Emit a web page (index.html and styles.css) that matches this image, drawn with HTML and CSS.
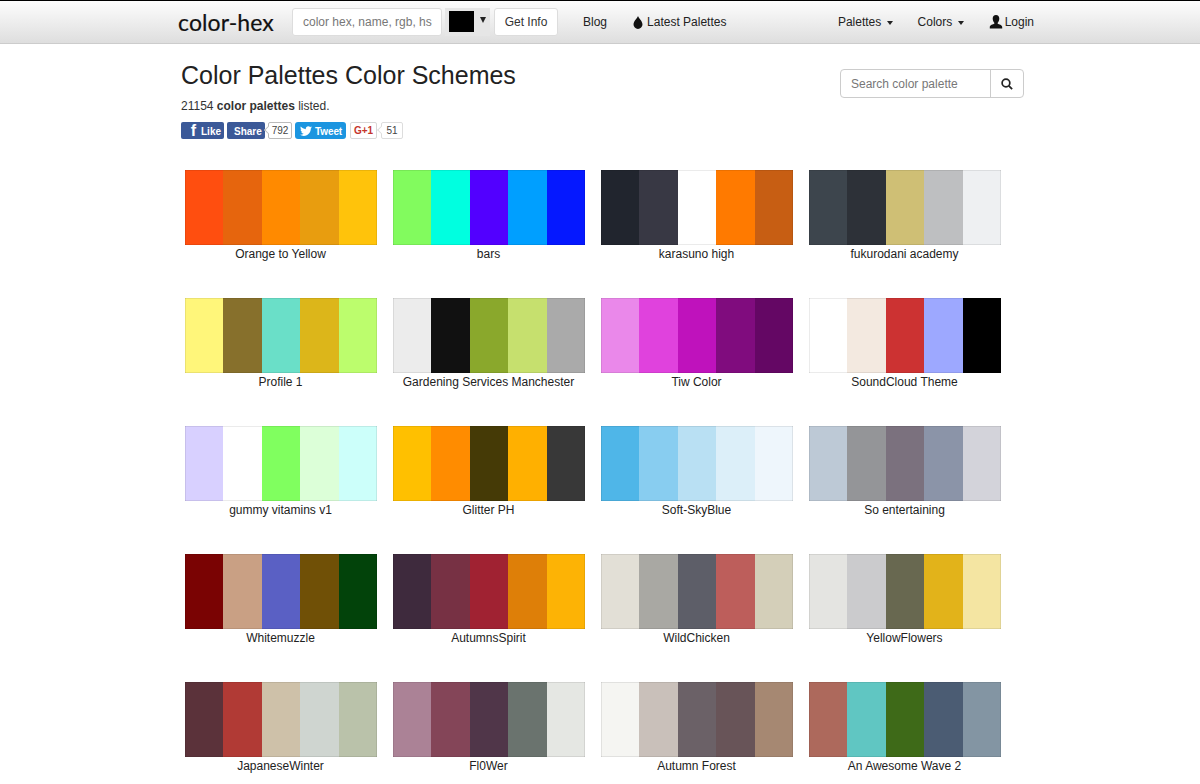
FILE: index.html
```html
<!DOCTYPE html>
<html>
	<head>
		<meta charset="utf-8">
		<title>Color Palettes Color Schemes</title>
		<link rel="stylesheet" href="styles.css">
	</head>
	<body>
		<div class="navbar">
			<div class="nav-inner">
				<a class="logo">color-hex</a>
				<div class="hex-input">color hex, name, rgb, hs</div>
				<div class="picker"><span class="picker-color"></span><span class="picker-arrow"></span></div>
				<div class="get-info">Get Info</div>
				<a class="nav-link blog">Blog</a>
				<a class="nav-link latest">
					<svg class="icon-drop" viewBox="0 0 12 14"><path d="M6 0C6.600 2.400 10.800 5.400 10.800 9C10.800 11.800 8.600 14 6 14C3.400 14 1.200 11.800 1.200 9C1.200 5.400 5.400 2.400 6 0Z"/></svg>
					Latest Palettes
				</a>
				<div class="nav-right">
					<a class="nav-link">Palettes <span class="caret"></span></a>
					<a class="nav-link">Colors <span class="caret"></span></a>
					<a class="nav-link login">
						<svg class="icon-user" viewBox="0 0 14 14"><path d="M7 0C9.200 0 10.300 1.600 10.300 3.600C10.300 5.400 9.500 6.900 8.700 7.700V8.700C10 9.300 13.200 10 13.200 12V13.600H0.800V12C0.800 10 4 9.300 5.300 8.700V7.700C4.500 6.900 3.700 5.400 3.700 3.600C3.700 1.600 4.800 0 7 0Z"/></svg>
						Login
					</a>
				</div>
			</div>
		</div>

		<div class="container">
			<div class="page-head">
				<div>
					<h1>Color Palettes Color Schemes</h1>
					<p class="count">21154 <b>color palettes</b> listed.</p>
					<div class="social">
						<span class="btn-fb like"><span class="fb-f">f</span>Like</span>
						<span class="btn-fb share">Share</span>
						<span class="bubble b-792">792</span>
						<span class="btn-tw">
							<svg class="icon-bird" viewBox="0 0 16 13"><path d="M16 1.500C15.400 1.800 14.800 2 14.100 2C14.800 1.600 15.300 1 15.600 0.200C14.900 0.600 14.200 0.900 13.500 1C12.900 0.400 12 0 11 0C9.200 0 7.700 1.500 7.700 3.300C7.700 3.600 7.700 3.800 7.800 4C5 3.900 2.600 2.600 1.100 0.600C0.800 1.100 0.700 1.600 0.700 2.200C0.700 3.300 1.300 4.300 2.200 4.900C1.600 4.900 1.100 4.700 0.700 4.500C0.700 6.100 1.800 7.500 3.300 7.800C2.800 7.900 2.300 7.900 1.800 7.800C2.200 9.100 3.400 10.100 4.900 10.100C3.700 11 2.200 11.600 0.600 11.600H0C1.500 12.500 3.200 13 5 13C11 13 14.400 8 14.400 3.600V3.200C15 2.800 15.600 2.200 16 1.500Z"/></svg>
							Tweet
						</span>
						<span class="btn-gplus">G+1</span>
						<span class="bubble b-51">51</span>
					</div>
				</div>
				<div class="search">
					<div class="search-input">Search color palette</div>
					<div class="search-btn">
						<svg viewBox="0 0 14 14"><circle cx="5.800" cy="5.800" r="4.500"/><path d="M9.200 9.200L13 13"/></svg>
					</div>
				</div>
			</div>

			<div class="palettes">
				<div class="palette">
					<div class="swatches"><i style="background:#ff4e0f"></i><i style="background:#e6650d"></i><i style="background:#ff8a00"></i><i style="background:#e89d0f"></i><i style="background:#ffc30b"></i></div>
					<div class="name">Orange to Yellow</div>
				</div>
				<div class="palette">
					<div class="swatches"><i style="background:#82fb5e"></i><i style="background:#00ffe0"></i><i style="background:#5200ff"></i><i style="background:#009fff"></i><i style="background:#0518ff"></i></div>
					<div class="name">bars</div>
				</div>
				<div class="palette">
					<div class="swatches"><i style="background:#21252e"></i><i style="background:#383844"></i><i style="background:#ffffff"></i><i style="background:#ff7a00"></i><i style="background:#c75e13"></i></div>
					<div class="name">karasuno high</div>
				</div>
				<div class="palette">
					<div class="swatches"><i style="background:#3d454d"></i><i style="background:#2d3138"></i><i style="background:#cfbf75"></i><i style="background:#bebfc1"></i><i style="background:#eef0f2"></i></div>
					<div class="name">fukurodani academy</div>
				</div>

				<div class="palette">
					<div class="swatches"><i style="background:#fff67a"></i><i style="background:#87702c"></i><i style="background:#6adfc8"></i><i style="background:#dcb61a"></i><i style="background:#bcfd6d"></i></div>
					<div class="name">Profile 1</div>
				</div>
				<div class="palette">
					<div class="swatches"><i style="background:#ececec"></i><i style="background:#111111"></i><i style="background:#8aa82c"></i><i style="background:#c6e06e"></i><i style="background:#aaaaaa"></i></div>
					<div class="name">Gardening Services Manchester</div>
				</div>
				<div class="palette">
					<div class="swatches"><i style="background:#ea88ea"></i><i style="background:#e042dd"></i><i style="background:#bf12bc"></i><i style="background:#800c7e"></i><i style="background:#640764"></i></div>
					<div class="name">Tiw Color</div>
				</div>
				<div class="palette">
					<div class="swatches"><i style="background:#ffffff"></i><i style="background:#f3e9e0"></i><i style="background:#cc3232"></i><i style="background:#9da8ff"></i><i style="background:#000000"></i></div>
					<div class="name">SoundCloud Theme</div>
				</div>

				<div class="palette">
					<div class="swatches"><i style="background:#d8d0ff"></i><i style="background:#ffffff"></i><i style="background:#80ff5f"></i><i style="background:#dcffd8"></i><i style="background:#ccfffa"></i></div>
					<div class="name">gummy vitamins v1</div>
				</div>
				<div class="palette">
					<div class="swatches"><i style="background:#ffc000"></i><i style="background:#ff8c00"></i><i style="background:#453a06"></i><i style="background:#ffb000"></i><i style="background:#383838"></i></div>
					<div class="name">Glitter PH</div>
				</div>
				<div class="palette">
					<div class="swatches"><i style="background:#4fb6e8"></i><i style="background:#88cdf0"></i><i style="background:#b9e0f3"></i><i style="background:#dceff9"></i><i style="background:#eef6fc"></i></div>
					<div class="name">Soft-SkyBlue</div>
				</div>
				<div class="palette">
					<div class="swatches"><i style="background:#bdc9d6"></i><i style="background:#949598"></i><i style="background:#7b717e"></i><i style="background:#8b94a8"></i><i style="background:#d3d3da"></i></div>
					<div class="name">So entertaining</div>
				</div>

				<div class="palette">
					<div class="swatches"><i style="background:#7a0303"></i><i style="background:#c9a084"></i><i style="background:#5a60c4"></i><i style="background:#705006"></i><i style="background:#02430a"></i></div>
					<div class="name">Whitemuzzle</div>
				</div>
				<div class="palette">
					<div class="swatches"><i style="background:#3e2a3d"></i><i style="background:#773144"></i><i style="background:#a02232"></i><i style="background:#de7f08"></i><i style="background:#fdb305"></i></div>
					<div class="name">AutumnsSpirit</div>
				</div>
				<div class="palette">
					<div class="swatches"><i style="background:#e2dfd6"></i><i style="background:#a9a8a3"></i><i style="background:#5d5e68"></i><i style="background:#bd5e5b"></i><i style="background:#d4cfb9"></i></div>
					<div class="name">WildChicken</div>
				</div>
				<div class="palette">
					<div class="swatches"><i style="background:#e4e4e1"></i><i style="background:#cbcbcd"></i><i style="background:#686850"></i><i style="background:#e2b31a"></i><i style="background:#f4e5a2"></i></div>
					<div class="name">YellowFlowers</div>
				</div>

				<div class="palette">
					<div class="swatches"><i style="background:#5b323a"></i><i style="background:#b13a35"></i><i style="background:#cec1a9"></i><i style="background:#cfd5d0"></i><i style="background:#bac2aa"></i></div>
					<div class="name">JapaneseWinter</div>
				</div>
				<div class="palette">
					<div class="swatches"><i style="background:#ab8296"></i><i style="background:#844558"></i><i style="background:#503649"></i><i style="background:#6a736e"></i><i style="background:#e5e7e3"></i></div>
					<div class="name">Fl0Wer</div>
				</div>
				<div class="palette">
					<div class="swatches"><i style="background:#f5f5f2"></i><i style="background:#c9c0ba"></i><i style="background:#6b6167"></i><i style="background:#685458"></i><i style="background:#a68872"></i></div>
					<div class="name">Autumn Forest</div>
				</div>
				<div class="palette">
					<div class="swatches"><i style="background:#ad695c"></i><i style="background:#60c6c2"></i><i style="background:#3e6a18"></i><i style="background:#4b5c73"></i><i style="background:#8395a3"></i></div>
					<div class="name">An Awesome Wave 2</div>
				</div>
			</div>
		</div>
	</body>
</html>
```

FILE: styles.css
```css
html, body{
	margin: 0;
	padding: 0;
}
body{
	font-family: "Liberation Sans", Arial, sans-serif;
	font-size: 12px;
	color: #333;
	background: #fff;
}
h1, p{
	margin: 0;
}
.navbar{
	height: 42px;
	border-top: 1px solid #000;
	border-bottom: 1px solid #ccc;
	background: linear-gradient(to bottom, #fdfdfd, #dedede);
}
.nav-inner{
	width: 856px;
	margin-left: 178px;
	display: flex;
	align-items: center;
	height: 42px;
}
.logo{
	font-family: Lato, sans-serif;
	font-size: 23px;
	letter-spacing: 0.1px;
	-webkit-text-stroke: 0.2px #111;
	color: #111;
	width: 114px;
	flex: none;
}
.hex-input{
	box-sizing: border-box;
	flex: none;
	width: 150px;
	height: 28px;
	line-height: 26px;
	padding-left: 10px;
	font-size: 12px;
	white-space: nowrap;
	color: #777;
	background: #fff;
	border: 1px solid #ddd;
	border-radius: 3px;
}
.picker{
	flex: none;
	width: 45px;
	height: 28px;
	margin-left: 3px;
	background: #e6e6e6;
	display: flex;
}
.picker-color{
	width: 25px;
	height: 21px;
	margin: 3px 0 0 4px;
	background: #000;
}
.picker-arrow{
	margin: 9px 0 0 6px;
	width: 0;
	height: 0;
	border-left: 3px solid transparent;
	border-right: 3px solid transparent;
	border-top: 6px solid #222;
}
.get-info{
	box-sizing: border-box;
	flex: none;
	width: 64px;
	height: 28px;
	line-height: 26px;
	text-align: center;
	margin-left: 4px;
	background: #fff;
	border: 1px solid #ddd;
	border-radius: 3px;
	color: #333;
}
.nav-link{
	color: #222;
	font-size: 12px;
	white-space: nowrap;
}
.blog{
	margin-left: 25px;
}
.latest{
	margin-left: 25px;
	display: flex;
	align-items: center;
}
.icon-drop{
	width: 12px;
	height: 13px;
	margin-right: 3px;
	fill: #111;
}
.nav-right{
	margin-left: auto;
	display: flex;
	align-items: center;
	gap: 25px;
}
.caret{
	display: inline-block;
	width: 0;
	height: 0;
	margin-left: 2px;
	vertical-align: middle;
	border: 3px solid transparent;
	border-top: 4px solid #222;
	border-bottom: 0;
}
.login{
	display: flex;
	align-items: center;
}
.icon-user{
	width: 14px;
	height: 14px;
	margin-right: 2px;
	fill: #111;
}
.container{
	width: 843px;
	margin-left: 181px;
}
.page-head{
	display: flex;
	justify-content: space-between;
	align-items: flex-start;
	height: 126px;
}
h1{
	font-size: 25px;
	font-weight: normal;
	color: #222;
	line-height: 30px;
	margin-top: 16px;
}
.count{
	font-size: 12px;
	line-height: 18px;
	margin-top: 7px;
}
.social{
	display: flex;
	align-items: center;
	margin-top: 7px;
	height: 17px;
	font-size: 10px;
	font-weight: bold;
	color: #fff;
}
.btn-fb, .btn-tw{
	height: 17px;
	padding-top: 1px;
	border-radius: 2px;
	display: flex;
	align-items: center;
	box-sizing: border-box;
}
.btn-fb{
	background: #3b5998;
}
.like{
	width: 43px;
}
.fb-f{
	width: 15px;
	margin-right: 5px;
	color: #fff;
	font-size: 16px;
	line-height: 16px;
	text-align: right;
}
.share{
	width: 38px;
	margin-left: 3px;
	padding-left: 7px;
}
.bubble{
	box-sizing: border-box;
	height: 17px;
	line-height: 16px;
	text-align: center;
	font-weight: normal;
	color: #444;
	border: 1px solid #bbb;
	border-radius: 2px;
	background: #fff;
	position: relative;
}
.bubble:before{
	content: "";
	position: absolute;
	left: -4px;
	top: 4px;
	width: 5px;
	height: 5px;
	background: #fff;
	border-left: 1px solid #bbb;
	border-bottom: 1px solid #bbb;
	transform: rotate(45deg) scale(0.9);
}
.b-792{
	width: 24px;
	margin-left: 3px;
}
.btn-tw{
	width: 51px;
	margin-left: 3px;
	padding-left: 5px;
	background: #1b95e0;
	border-radius: 3px;
	letter-spacing: -0.1px;
}
.icon-bird{
	width: 12px;
	height: 10px;
	margin-right: 3px;
	fill: #fff;
}
.btn-gplus{
	box-sizing: border-box;
	width: 27px;
	height: 17px;
	line-height: 16px;
	margin-left: 4px;
	text-align: center;
	color: #c5352c;
	border: 1px solid #d8d8d8;
	border-radius: 2px;
	background: #fff;
}
.b-51{
	width: 22px;
	margin-left: 4px;
	border-color: #ddd;
}
.b-51:before{
	border-color: #ddd;
}
.search{
	display: flex;
	margin-top: 25px;
	height: 29px;
	border: 1px solid #ccc;
	border-radius: 4px;
	box-sizing: border-box;
	width: 184px;
}
.search-input{
	width: 150px;
	padding-left: 10px;
	box-sizing: border-box;
	line-height: 28px;
	color: #777;
	border-right: 1px solid #ccc;
}
.search-btn{
	flex: 1;
	display: flex;
	align-items: center;
	justify-content: center;
}
.search-btn svg{
	width: 12px;
	height: 12px;
	fill: none;
	stroke: #222;
	stroke-width: 2;
}
.palettes{
	display: grid;
	grid-template-columns: repeat(4, 208px);
	grid-auto-rows: 128px;
	padding-left: 4px;
}
.swatches{
	display: flex;
	width: 192px;
	height: 75px;
}
.swatches i{
	flex: 1;
	display: block;
	box-shadow: inset 0 1px rgba(0,0,0,0.08), inset 0 -1px rgba(0,0,0,0.08);
}
.swatches i:first-child{
	box-shadow: inset 0 1px rgba(0,0,0,0.08), inset 0 -1px rgba(0,0,0,0.08), inset 1px 0 rgba(0,0,0,0.08);
}
.swatches i:last-child{
	box-shadow: inset 0 1px rgba(0,0,0,0.08), inset 0 -1px rgba(0,0,0,0.08), inset -1px 0 rgba(0,0,0,0.08);
}
.name{
	width: 191px;
	text-align: center;
	color: #222;
	line-height: 18px;
}
```
